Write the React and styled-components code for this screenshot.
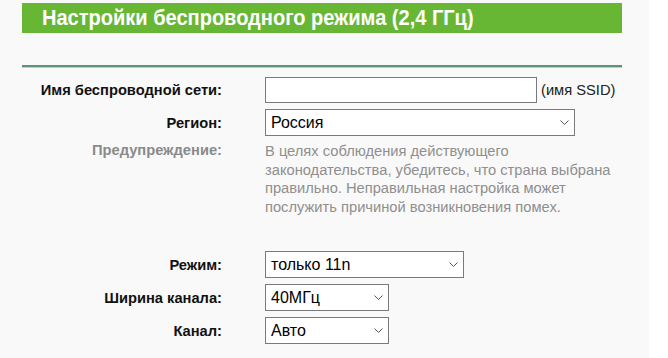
import styled, { createGlobalStyle } from 'styled-components';

const GlobalStyle = createGlobalStyle`
  html, body {
    margin: 0;
    padding: 0;
    background: #ffffff;
  }
  body {
    font-family: 'Liberation Sans', Arial, sans-serif;
  }
`;

const Page = styled.div`
  width: 649px;
  min-height: 358px;
  background: #f9f9f9;
  padding-top: 3px;
  box-sizing: border-box;
`;

const TitleBar = styled.div`
  margin-left: 22px;
  width: 600px;
  height: 30px;
  box-sizing: border-box;
  padding-left: 20px;
  background: #67b734;
  display: flex;
  align-items: center;
  overflow: hidden;
`;

/* narrow bold face, like Arial Narrow */
const Title = styled.h1`
  margin: 0;
  color: #fff;
  font-family: 'Liberation Sans', Arial, sans-serif;
  font-size: 22px;
  font-weight: bold;
  white-space: nowrap;
  transform: scaleX(0.91);
  transform-origin: left center;
`;

const Divider = styled.div`
  margin: 32px 0 0 22px;
  width: 600px;
  border-top: 2px solid #5a957a;
  border-bottom: 1px solid #b9d3c6;
`;

const Form = styled.div`
  margin-top: 9px;
  display: flex;
  flex-direction: column;
  gap: 6px;
`;

const Row = styled.div`
  display: grid;
  grid-template-columns: 222px auto;
  column-gap: 43px;
  align-items: ${(p) => (p.$top ? 'start' : 'center')};
  margin-top: ${(p) => p.$gap || 0}px;
`;

const Label = styled.div`
  text-align: right;
  font-size: 14.7px;
  font-weight: bold;
  color: ${(p) => (p.$muted ? '#8a8a8a' : '#111')};
  white-space: nowrap;
`;

const Field = styled.div`
  display: flex;
  align-items: center;
  gap: 4px;
`;

const TextInput = styled.input`
  width: 272px;
  height: 26px;
  box-sizing: border-box;
  border: 1px solid #7a7a7a;
  background: #fff;
  margin: 0;
  padding: 0 5px;
  font: 16px 'Liberation Sans', Arial, sans-serif;
  outline: none;
`;

const Hint = styled.span`
  font-size: 14.7px;
  color: #222;
`;

const SelectBox = styled.div`
  width: ${(p) => p.$width}px;
  height: 27px;
  box-sizing: border-box;
  border: 1px solid #7a7a7a;
  background: #fff;
  display: flex;
  align-items: center;
  justify-content: space-between;
  padding: 0 5px 0 5px;
  font-size: 16px;
  color: #000;
`;

const Chevron = styled.svg`
  width: 9px;
  height: 5px;
  flex: none;
`;

const Warning = styled.div`
  font-size: 14.7px;
  line-height: 18.6px;
  color: #8f8f8f;
`;

function Select({ width, value }) {
  return (
    <SelectBox $width={width}>
      <span>{value}</span>
      <Chevron viewBox="0 0 9 5">
        <polyline points="0.5,0.5 4.5,4.5 8.5,0.5" fill="none" stroke="#555" strokeWidth="1" />
      </Chevron>
    </SelectBox>
  );
}

export default function App() {
  return (
    <>
      <GlobalStyle />
      <Page>
        <TitleBar>
          <Title>Настройки беспроводного режима (2,4 ГГц)</Title>
        </TitleBar>
        <Divider />
        <Form>
          <Row>
            <Label>Имя беспроводной сети:</Label>
            <Field>
              <TextInput type="text" defaultValue="" />
              <Hint>(имя SSID)</Hint>
            </Field>
          </Row>
          <Row>
            <Label>Регион:</Label>
            <Field>
              <Select width={310} value="Россия" />
            </Field>
          </Row>
          <Row $top>
            <Label $muted>Предупреждение:</Label>
            <Warning>
              В целях соблюдения действующего
              <br />
              законодательства, убедитесь, что страна выбрана
              <br />
              правильно. Неправильная настройка может
              <br />
              послужить причиной возникновения помех.
            </Warning>
          </Row>
          <Row $gap={29}>
            <Label>Режим:</Label>
            <Field>
              <Select width={199} value="только 11n" />
            </Field>
          </Row>
          <Row>
            <Label>Ширина канала:</Label>
            <Field>
              <Select width={124} value="40МГц" />
            </Field>
          </Row>
          <Row>
            <Label>Канал:</Label>
            <Field>
              <Select width={124} value="Авто" />
            </Field>
          </Row>
        </Form>
      </Page>
    </>
  );
}
